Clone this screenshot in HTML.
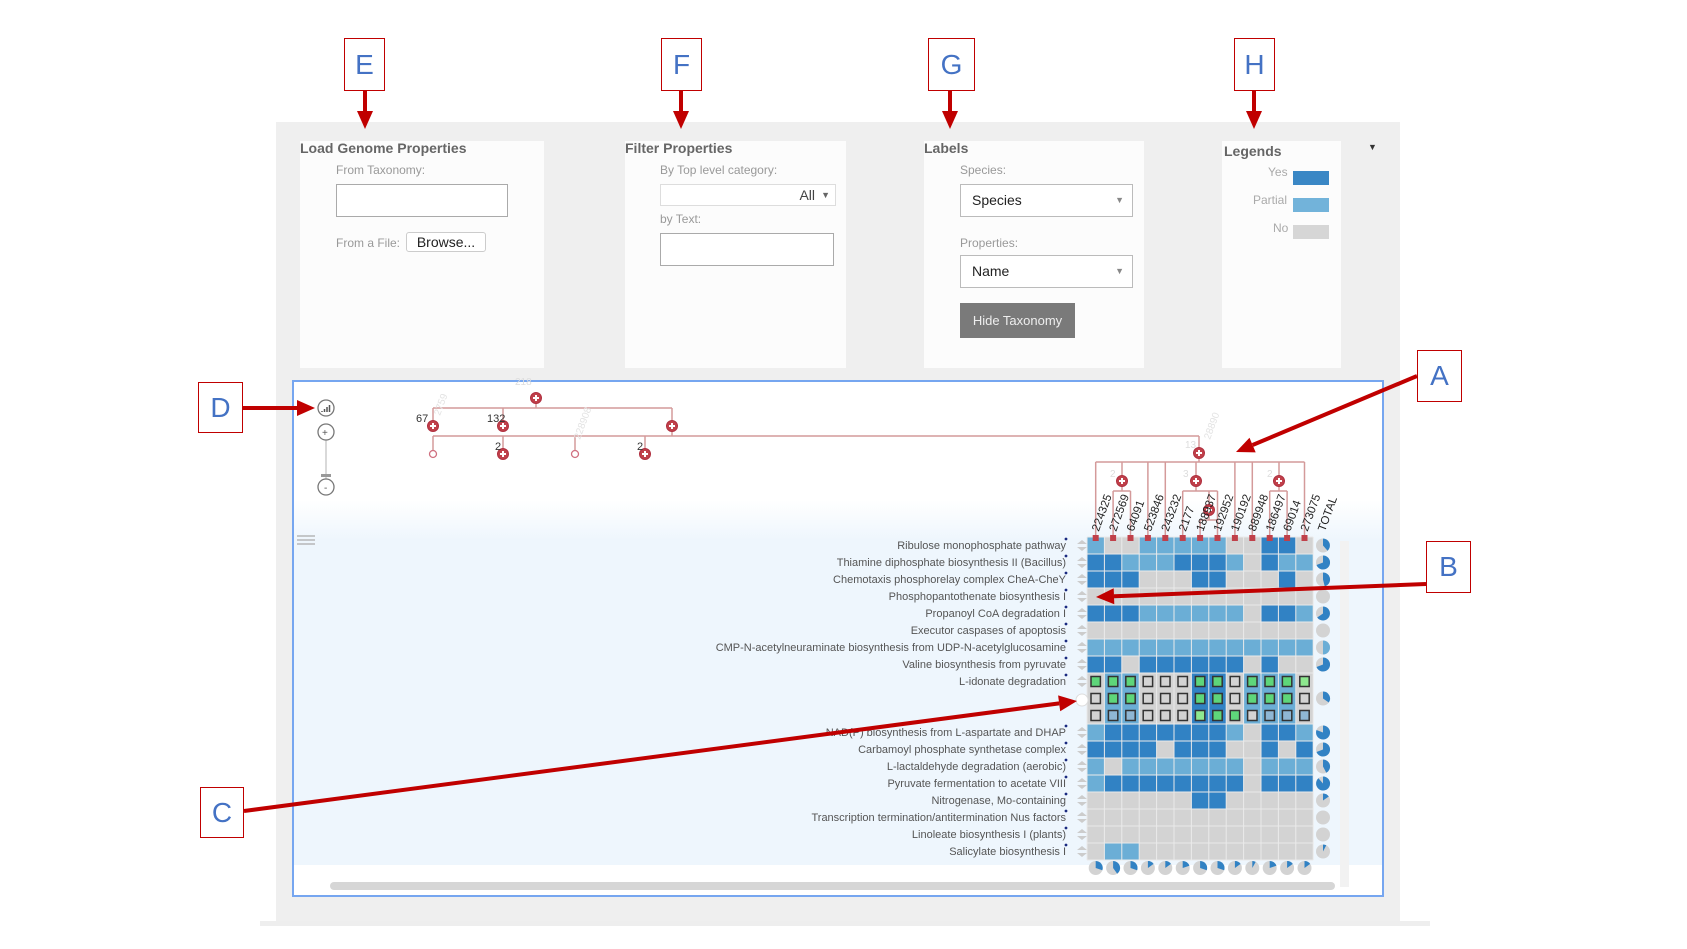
<!DOCTYPE html>
<html><head><meta charset="utf-8">
<style>
*{margin:0;padding:0;box-sizing:border-box}
body{width:1687px;height:949px;background:#fff;position:relative;overflow:hidden;font-family:"Liberation Sans",sans-serif}
.a{position:absolute}
.card{position:absolute;background:#fcfcfc}
.t{position:absolute;font-weight:bold;font-size:14px;color:#666;white-space:nowrap}
.l{position:absolute;font-size:12px;color:#999;white-space:nowrap}
.in{position:absolute;background:#fff;border:1px solid #aaa}
.sel{position:absolute;background:#fff;border:1px solid #bbb;font-size:14px;color:#222}
.box{position:absolute;background:#fff;border:1px solid #c00000;color:#4472c4;font-size:28px;text-align:center}
</style></head><body>
<div class="a" style="left:276px;top:122px;width:1124px;height:803px;background:#efefef"></div>
<div class="a" style="left:260px;top:921px;width:1170px;height:5px;background:#eee"></div>
<div class="card" style="left:300px;top:141px;width:244px;height:227px"></div>
<div class="card" style="left:625px;top:141px;width:221px;height:227px"></div>
<div class="card" style="left:924px;top:141px;width:220px;height:227px"></div>
<div class="card" style="left:1222px;top:141px;width:119px;height:227px"></div>

<div class="t" style="left:300px;top:140px">Load Genome Properties</div>
<div class="l" style="left:336px;top:163px">From Taxonomy:</div>
<div class="in" style="left:336px;top:184px;width:172px;height:33px"></div>
<div class="l" style="left:336px;top:236px">From a File:</div>
<div class="a" style="left:406px;top:232px;width:80px;height:20px;border:1px solid #ccc;border-radius:3px;background:#fff;font-size:14px;color:#222;text-align:center;line-height:18px">Browse...</div>

<div class="t" style="left:625px;top:140px">Filter Properties</div>
<div class="l" style="left:660px;top:163px">By Top level category:</div>
<div class="sel" style="left:660px;top:184px;width:176px;height:22px;border-color:#ddd;text-align:right;padding-right:20px;line-height:20px;color:#444">All<span style="position:absolute;right:5px;font-size:9px;color:#666">▼</span></div>
<div class="l" style="left:660px;top:212px">by Text:</div>
<div class="in" style="left:660px;top:233px;width:174px;height:33px"></div>

<div class="t" style="left:924px;top:140px">Labels</div>
<div class="l" style="left:960px;top:163px">Species:</div>
<div class="sel" style="left:960px;top:184px;width:173px;height:33px;line-height:31px;padding-left:11px">Species<span style="position:absolute;right:8px;font-size:9px;color:#888">▼</span></div>
<div class="l" style="left:960px;top:236px">Properties:</div>
<div class="sel" style="left:960px;top:255px;width:173px;height:33px;line-height:31px;padding-left:11px">Name<span style="position:absolute;right:8px;font-size:9px;color:#888">▼</span></div>
<div class="a" style="left:960px;top:303px;width:115px;height:35px;background:#7a7a7a;color:#eee;font-size:13px;line-height:35px;text-align:center">Hide Taxonomy</div>

<div class="t" style="left:1224px;top:143px">Legends</div>
<div class="a" style="left:1368px;top:142px;font-size:9px;color:#333">▼</div>
<div class="l" style="left:1268px;top:165px;color:#aaa">Yes</div>
<div class="a" style="left:1293px;top:171px;width:36px;height:14px;background:#3a87c5"></div>
<div class="l" style="left:1253px;top:193px;color:#aaa">Partial</div>
<div class="a" style="left:1293px;top:198px;width:36px;height:14px;background:#72b3da"></div>
<div class="l" style="left:1273px;top:221px;color:#aaa">No</div>
<div class="a" style="left:1293px;top:225px;width:36px;height:14px;background:#d6d6d6"></div>

<div class="a" style="left:292px;top:380px;width:1092px;height:517px;background:#fff;border:2px solid #76a6f0"></div>
<div class="a" style="left:294px;top:500px;width:1088px;height:41px;background:linear-gradient(#fff,#eef6fd)"></div>
<div class="a" style="left:294px;top:541px;width:1088px;height:324px;background:#eef6fd"></div>
<div class="a" style="left:1340px;top:541px;width:9px;height:346px;background:#f2f2f2"></div>
<div class="a" style="left:330px;top:882px;width:1005px;height:8px;background:#d6d6d6;border-radius:4px"></div>

<svg class="a" id="s" style="left:0;top:0" width="1687" height="949" xmlns="http://www.w3.org/2000/svg" font-family="Liberation Sans, sans-serif"></svg>

<div class="box" style="left:344px;top:38px;width:41px;height:53px;line-height:51px">E</div>
<div class="box" style="left:661px;top:38px;width:41px;height:53px;line-height:51px">F</div>
<div class="box" style="left:928px;top:38px;width:47px;height:53px;line-height:51px">G</div>
<div class="box" style="left:1234px;top:38px;width:41px;height:53px;line-height:51px">H</div>
<div class="box" style="left:1417px;top:350px;width:45px;height:52px;line-height:50px">A</div>
<div class="box" style="left:1426px;top:541px;width:45px;height:52px;line-height:50px">B</div>
<div class="box" style="left:200px;top:787px;width:44px;height:51px;line-height:49px">C</div>
<div class="box" style="left:198px;top:382px;width:45px;height:51px;line-height:49px">D</div>

<script>
var s=document.getElementById('s'),h='';
function L(x1,y1,x2,y2,c,w){h+='<line x1="'+x1+'" y1="'+y1+'" x2="'+x2+'" y2="'+y2+'" stroke="'+(c||'#d49a9a')+'" stroke-width="'+(w||1.5)+'"/>';}
function R(x,y,w,hh,f,st){h+='<rect x="'+x+'" y="'+y+'" width="'+w+'" height="'+hh+'" fill="'+f+'"'+(st?' stroke="'+st+'" stroke-width="1.5"':'')+'/>';}
function T(x,y,t,sz,c,ex){h+='<text x="'+x+'" y="'+y+'" font-size="'+sz+'" fill="'+c+'" '+(ex||'')+'>'+t+'</text>';}
function node(x,y){h+='<circle cx="'+x+'" cy="'+y+'" r="5.5" fill="#c0404a" stroke="#b03040"/><path d="M'+(x-3)+' '+y+'h6M'+x+' '+(y-3)+'v6" stroke="#fff" stroke-width="2"/>';}
function leaf(x,y){h+='<circle cx="'+x+'" cy="'+y+'" r="3.5" fill="#fff" stroke="#d07080" stroke-width="1.3"/>';}
function pie(x,y,r,f,c){h+='<circle cx="'+x+'" cy="'+y+'" r="'+r+'" fill="#d3d3d3"/>';if(f<=0)return;if(f>=1){h+='<circle cx="'+x+'" cy="'+y+'" r="'+r+'" fill="'+c+'"/>';return;}
var a=f*2*Math.PI,ex=x+r*Math.sin(a),ey=y-r*Math.cos(a);h+='<path d="M'+x+' '+y+'L'+x+' '+(y-r)+'A'+r+' '+r+' 0 '+(f>.5?1:0)+' 1 '+ex.toFixed(1)+' '+ey.toFixed(1)+'Z" fill="'+c+'"/>';}
h+='<circle cx="326" cy="408" r="8" fill="#fff" stroke="#777" stroke-width="1.3"/><path d="M322 412v-1M324.5 412v-3M327 412v-5M329.5 412v-7" stroke="#555" stroke-width="1.5"/>';
L(326,440,326,486,'#ccc',1.5);
h+='<circle cx="326" cy="432" r="8" fill="#fff" stroke="#777" stroke-width="1.3"/>';T(322,436,'+',10,'#555');
R(321,474,10,3,'#999');
h+='<circle cx="326" cy="487" r="8" fill="#fff" stroke="#777" stroke-width="1.3"/>';T(324,491,'-',10,'#555');
h+='<path d="M297 536h18M297 540h18M297 544h18" stroke="#aaa" stroke-width="1.2"/>';
L(536,401,536,408);L(433,408,672,408);L(433,408,433,426);L(503,408,503,426);L(672,408,672,426);
L(433,436,1199,436);L(672,426,672,436);L(433,436,433,454);L(503,436,503,454);L(575,436,575,454);L(645,436,645,454);L(1199,436,1199,453);
node(536,398);node(433,426);node(503,426);node(672,426);leaf(433,454);node(503,454);leaf(575,454);node(645,454);
T(416,422,'67',11,'#333');T(487,422,'132',11,'#333');T(495,450,'2',11,'#333');T(637,450,'2',11,'#333');
T(515,385,'218',10,'#ddd');T(440,416,'2759',10,'#e3e3e3','transform="rotate(-70 440 416)"');T(580,440,'228908',10,'#e3e3e3','transform="rotate(-70 580 440)"');
var g0=1087,cw=17.4,r0=537,rh=17;
function cx(i){return g0+cw*(i+.5);}
L(cx(0),462,cx(12),462);L(1199,453,1199,462);
[0,3,4,8,9,12].forEach(function(i){L(cx(i),462,cx(i),538);});
L(1122,462,1122,491);L(cx(1),491,cx(2),491);L(cx(1),491,cx(1),538);L(cx(2),491,cx(2),538);
L(1196,462,1196,491);L(cx(5),491,cx(7),491);L(cx(5),491,cx(5),538);L(cx(7),491,cx(7),538);L(1209,491,1209,520);L(cx(6),520,cx(7),520);L(cx(6),520,cx(6),538);
L(1279,462,1279,491);L(cx(10),491,cx(11),491);L(cx(10),491,cx(10),538);L(cx(11),491,cx(11),538);
node(1199,453);node(1122,481);node(1196,481);node(1279,481);node(1209,510);
T(1185,448,'13',10,'#ddd');T(1110,477,'2',10,'#ddd');T(1183,477,'3',10,'#ddd');T(1267,477,'2',10,'#ddd');
T(1210,440,'28890',10,'#e3e3e3','transform="rotate(-70 1210 440)"');
var cl=['224325','272569','64091','523846','243232','2177','188937','192952','190192','889948','186497','69014','273075','TOTAL'];
cl.forEach(function(t,i){var x=g0+cw*i+cw*.5+3,y=532;T(x,y,t,11.5,'#222','transform="rotate(-70 '+x+' '+y+')"');});
var names=['Ribulose monophosphate pathway','Thiamine diphosphate biosynthesis II (Bacillus)','Chemotaxis phosphorelay complex CheA-CheY','Phosphopantothenate biosynthesis I','Propanoyl CoA degradation I','Executor caspases of apoptosis','CMP-N-acetylneuraminate biosynthesis from UDP-N-acetylglucosamine','Valine biosynthesis from pyruvate','L-idonate degradation','','','NAD(P) biosynthesis from L-aspartate and DHAP','Carbamoyl phosphate synthetase complex','L-lactaldehyde degradation (aerobic)','Pyruvate fermentation to acetate VIII','Nitrogenase, Mo-containing','Transcription termination/antitermination Nus factors','Linoleate biosynthesis I (plants)','Salicylate biosynthesis I'];
var data=['LGGLLLLLGGDDG','DDLLLDDDLGDLL','DDDGGGDDGGGDG','GGGGGGGGGGGGG','DDDLLLLLLGDDL','GGGGGGGGGGGGG','LLLLLLLLLLLLL','DDGDDDDDDGDGG','GLLGGGDDGLLLG','GLLGGGDDGLLLG','GLLGGGDDGLLLG','LDDDDDDDLGDDL','DDDDGDDDGGDGD','LGLLLLLLLGLLL','LDDDDDDDDGDDD','GGGGGGDDGGGGG','GGGGGGGGGGGGG','GGGGGGGGGGGGG','GLLGGGGGGGGGG'];
var col={D:'#3182c4',L:'#6baed6',G:'#d3d3d3'};
var inner=['gggwwwggwgggG','wggwwwggwgggw','wbbwwwGggwbbbw'];
data.forEach(function(r,j){var y=r0+rh*j,f=0;
 for(var i=0;i<13;i++){R(g0+cw*i,y,cw,rh,col[r[i]]);f+=r[i]=='D'?1:r[i]=='L'?.5:0;}
 if(j>=8&&j<=10){var p=inner[j-8];for(var i=0;i<13;i++){var c=p[i],fc=c=='g'?'#5ed67a':c=='G'?'#8ee88f':c=='b'?'#8fb7d4':'#d3d3d3';R(g0+cw*i+4,y+3.5,cw-8,rh-7,fc,'#333');}}
 if(names[j])T(1066,y+12,names[j],11,'#555','text-anchor="end"');
 if(j!==9&&j!==10){h+='<path d="M1077 '+(y+7)+'l5-4 5 4zM1077 '+(y+10)+'l5 4 5-4z" fill="#ccc"/>';h+='<circle cx="1066" cy="'+(y+2)+'" r="1.4" fill="#1a2a80"/>';}
 if(j!==8&&j!==10)pie(1323,y+8.5,7,f/13,r[0]=='L'&&f/13>.45&&f/13<.55?'#6baed6':'#3182c4');
});
for(var i=0;i<=13;i++){L(g0+cw*i,r0,g0+cw*i,r0+rh*19,'#eaeaea',1);}
for(var j=0;j<=19;j++){if(j==9||j==10)continue;L(g0,r0+rh*j,g0+cw*13,r0+rh*j,'#eaeaea',1);}
h+='<circle cx="1082" cy="700" r="6" fill="#fff" stroke="#ddd"/>';
[0,1,2,3,4,5,6,7,8,9,10,11,12].forEach(function(i){R(cx(i)-3,535,6,6,'#c0404a');pie(cx(i),868,7,[.3,.4,.3,.15,.15,.2,.3,.3,.15,.08,.2,.15,.15][i],'#3182c4');});
function arr(x1,y1,x2,y2){var a=Math.atan2(y2-y1,x2-x1),l=18,w=8,bx=x2-l*Math.cos(a),by=y2-l*Math.sin(a);
 L(x1,y1,bx,by,'#c00000',4);
 h+='<path d="M'+x2+' '+y2+'L'+(bx+w*Math.sin(a)).toFixed(1)+' '+(by-w*Math.cos(a)).toFixed(1)+'L'+(bx-w*Math.sin(a)).toFixed(1)+' '+(by+w*Math.cos(a)).toFixed(1)+'Z" fill="#c00000"/>';}
arr(365,91,365,129);arr(681,91,681,129);arr(950,91,950,129);arr(1254,91,1254,129);
arr(243,408,315,408);arr(1417,376,1236,452);arr(1426,584,1096,597);arr(244,811,1077,701);
s.innerHTML=h;
</script>
</body></html>
